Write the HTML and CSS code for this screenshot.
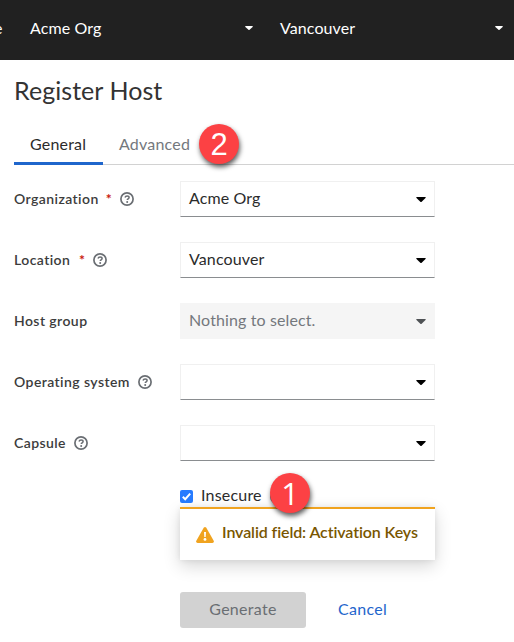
FILE: index.html
```
<!DOCTYPE html>
<html lang="en">
<head>
<meta charset="utf-8">
<title>Register Host</title>
<link rel="stylesheet" href="styles.css">
</head>
<body>
<svg class="defs" width="0" height="0">
  <symbol id="caret" viewBox="0 0 10 6"><path d="M.8 0h8.4q1 .3.3 1.1L5.7 4.7q-.7.6-1.4 0L.5 1.1Q-.2.3.8 0z"/></symbol>
  <symbol id="help" viewBox="0 0 14 14"><circle cx="7" cy="7" r="6.1" fill="none" stroke="currentColor" stroke-width="1.7"/><path d="M5 5.5C5.3 4.5 6 4.1 7.1 4.1c1.2 0 2 .6 2 1.5 0 1.3-1.8 1.3-1.8 2.5" fill="none" stroke="currentColor" stroke-width="1.5"/><circle cx="7.2" cy="10" r="1"/></symbol>
</svg>
<header class="masthead">
  <span class="clipped">e</span>
  <div class="context"><span class="t-org">Acme Org</span><svg class="caret small"><use href="#caret"/></svg></div>
  <div class="context"><span class="t-city">Vancouver</span><svg class="caret small"><use href="#caret"/></svg></div>
</header>
<main>
  <h1>Register Host</h1>
  <nav class="tabs">
    <a class="tab active">General</a>
    <a class="tab advanced">Advanced<span class="marker two">2</span></a>
  </nav>
  <form class="form">
    <div class="row"><label><span class="l-org">Organization</span><b>*</b><svg class="help"><use href="#help"/></svg></label>
      <div class="select"><span class="t-org">Acme Org</span><svg class="caret"><use href="#caret"/></svg></div></div>
    <div class="row"><label><span class="l-loc">Location</span><b>*</b><svg class="help"><use href="#help"/></svg></label>
      <div class="select"><span class="t-city">Vancouver</span><svg class="caret"><use href="#caret"/></svg></div></div>
    <div class="row"><label><span class="l-group">Host group</span></label>
      <div class="select disabled"><span class="t-none">Nothing to select.</span><svg class="caret"><use href="#caret"/></svg></div></div>
    <div class="row"><label><span class="l-os">Operating system</span><svg class="help"><use href="#help"/></svg></label>
      <div class="select"><span></span><svg class="caret"><use href="#caret"/></svg></div></div>
    <div class="row"><label><span class="l-cap">Capsule</span><svg class="help"><use href="#help"/></svg></label>
      <div class="select"><span></span><svg class="caret"><use href="#caret"/></svg></div></div>
    <div class="fields">
      <div class="check">
        <svg class="box" viewBox="0 0 13 13"><rect width="13" height="13" rx="2" fill="#267bff"/><path d="M2.8 6.8 5.2 9.2 10.2 3.6" fill="none" stroke="#fff" stroke-width="2"/></svg>
        <span class="t-insecure">Insecure</span>
        <svg class="help"><use href="#help"/></svg>
        <span class="marker one">1</span>
      </div>
      <div class="alert">
        <svg class="warn" viewBox="0 0 18 16"><path d="M7.7.8q1.3-1.5 2.6 0l7.4 12.9q.7 2-1.3 2.3H1.6q-2-.3-1.3-2.3z" fill="#f0a31f"/><path d="M8 5h2l-.3 5H8.3z" fill="#fff"/><circle cx="9" cy="12.4" r="1.4" fill="#fff"/></svg>
        <strong>Invalid field: Activation Keys</strong>
      </div>
      <div class="actions"><span class="generate">Generate</span><a class="cancel">Cancel</a></div>
    </div>
  </form>
</main>
</body>
</html>
```
FILE: styles.css
```
* { box-sizing: border-box; }
body { margin: 0; width: 514px; height: 642px; overflow: hidden; background: #fff; color: #2b2b2b; font: 400 16px/24px Lato, "Liberation Sans", sans-serif; letter-spacing: .12px; }
.defs { position: absolute; }
span, strong { white-space: nowrap; }
.masthead { height: 60px; background: #212121; color: #fff; display: flex; align-items: center; padding-bottom: 4px; overflow: hidden; letter-spacing: .1px; }
.clipped { width: 30px; margin-left: -6px; flex: none; padding-right: 6px; }
.context { width: 250px; flex: none; display: flex; align-items: center; justify-content: space-between; padding-right: 27px; }
.clipped + .context { margin-left: 6px; }
.caret { width: 10px; height: 6px; flex: none; fill: currentColor; }
.small { width: 8px; height: 5px; }
main { padding-left: 14px; }
h1 { margin: 0; padding-top: 14px; height: 65px; font-size: 25px; line-height: 32px; font-weight: 400; letter-spacing: .05px; color: #333; }
.tabs { display: flex; height: 40px; border-bottom: 1px solid #d2d2d2; }
.tab { height: 40px; padding: 7px 16px; color: #74787d; line-height: 24px; letter-spacing: .2px; }
.tab.active { color: #2b2b2b; border-bottom: 3px solid #1f66cc; width: 89px; }
.advanced { position: relative; }
.marker { position: absolute; width: 40px; height: 40px; border-radius: 50%; background: #fc4144; color: #fff; font: 31px/41px "Liberation Sans", sans-serif; letter-spacing: 0; text-align: center; box-shadow: 1px 3px 5px rgba(0,0,0,.65); z-index: 2; }
.two { left: 96px; top: -1px; }
.one { left: 90px; top: -13px; font-family: "Open Sans", sans-serif; }
.form { padding-top: 16px; }
.row { display: flex; height: 61px; }
label { width: 166px; padding-top: 6px; height: 36px; display: flex; align-items: flex-start; font-size: 14px; font-weight: 600; letter-spacing: .42px; color: #3c3c3c; }
label b { color: #c9190b; margin-left: 7px; width: 6px; font-weight: 700; }
.l-loc { width: 58px; }
.help { width: 14px; height: 14px; margin-left: 8px; margin-top: 5px; color: #6a6e73; fill: currentColor; flex: none; }
.select { width: 255px; height: 36px; border: 1px solid #f0f0f0; border-bottom-color: #8a8d90; padding: 0 8px; display: flex; align-items: center; justify-content: space-between; }
.select span { margin-top: -2px; }
.select .caret { color: #000; margin-top: 1px; }
.disabled { background: #f5f5f5; border-color: #f5f5f5; color: #74787d; }
.disabled .caret { color: #4f5255; }
.fields { margin-left: 166px; width: 255px; }
.check { position: relative; height: 21px; display: flex; align-items: center; }
.t-insecure { margin-top: -3px; letter-spacing: .2px; }
.box { width: 13px; height: 13px; margin-right: 8px; }
.check .help { margin-top: 0; }
.alert { height: 53px; border-top: 2px solid #f0a31f; background: #fff; box-shadow: 0 6px 16px rgba(0,0,0,.16), 0 0 6px rgba(0,0,0,.08); display: flex; padding: 11px 16px; }
.warn { width: 18px; height: 16px; margin: 7px 8px 0 0; }
strong { color: #795600; font-size: 16px; font-weight: 600; letter-spacing: -.1px; }
.actions { display: flex; margin-top: 32px; line-height: 34px; letter-spacing: .3px; }
.generate { width: 126px; height: 36px; border-radius: 3px; background: #d2d2d2; color: #6a6e73; text-align: center; }
.cancel { margin-left: 32px; color: #1f66cc; }
```
